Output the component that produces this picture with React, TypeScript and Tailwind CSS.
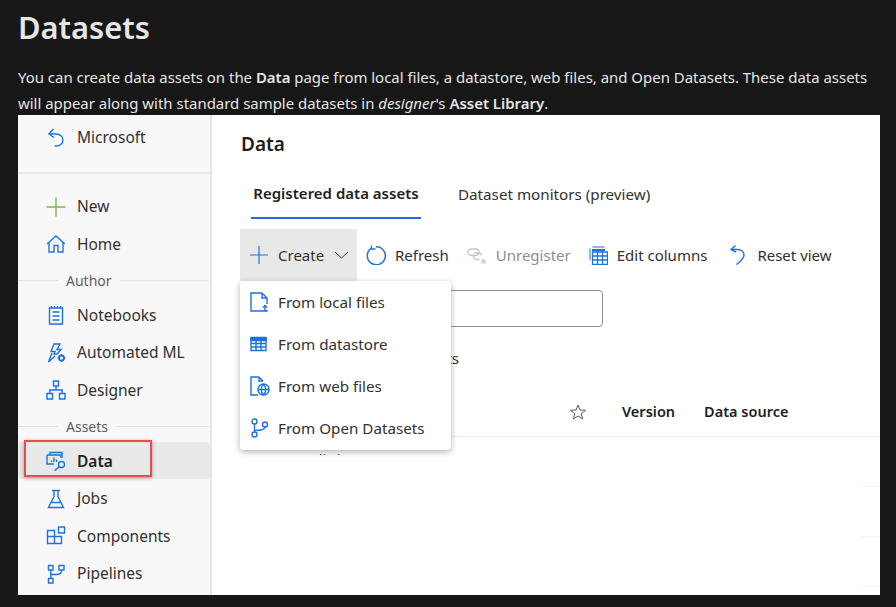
import type { ReactNode } from "react";

const BLUE = "#1c72e0";

function Ico({ children, w = 20, h = 20 }: { children: ReactNode; w?: number; h?: number }) {
  return (
    <svg width={w} height={h} viewBox={`0 0 ${w} ${h}`} fill="none" stroke={BLUE} strokeWidth="1.4" className="shrink-0">
      {children}
    </svg>
  );
}

const BackIcon = () => (
  <Ico>
    <path d="M7.500 1 3 6l5 3.500" />
    <path d="M3.500 6h6.500c4 0 7 2.500 7 6s-3 6-6.500 6H8.500" />
  </Ico>
);
const PlusGreenIcon = () => (
  <Ico>
    <path d="M10 0.500v19M0.500 10h19" stroke="#7ab648" />
  </Ico>
);
const HomeIcon = () => (
  <Ico>
    <path d="M1 10 10 2l9 8" />
    <path d="M3 8.500v9.500h5v-6.500h4V18h5V8.500" />
  </Ico>
);
const NotebookIcon = () => (
  <Ico>
    <path d="M3.500 3h13v16h-13z" />
    <path d="M5.500 1v2M8.500 1v2M11.500 1v2M14.500 1v2M6.500 7h7M6.500 11h7M6.500 15h7" />
  </Ico>
);
const AutoMlIcon = () => (
  <Ico>
    <path d="M8 1h6l-3 5.500h4L11 11H8l1-2.500H5z" />
    <path d="M6 10 2.500 19 9 13" />
    <circle cx="15.500" cy="15" r="2.500" strokeWidth="1.800" />
    <path d="M15.500 11v1.200M15.500 17.800V19M11.500 15h1.200M18.300 15h1.200" />
  </Ico>
);
const DesignerIcon = () => (
  <Ico>
    <path d="M7.500 1h5v5h-5zM1 13.500h5.500V19H1zM13.500 13.500H19V19h-5.500z" />
    <path d="M10 6v4M3.800 13.500V10h12.400v3.500" />
  </Ico>
);
const DataIcon = () => (
  <Ico>
    <path d="M4 4V1.500h12V7" />
    <path d="M1 4h14v3M8 13H1V4" />
    <path d="M5.500 11V9.500M8 11V6.500M10.500 11V8.500" />
    <circle cx="15.500" cy="13.500" r="3" />
    <path d="m13.300 15.700-4.800 4" />
  </Ico>
);
const JobsIcon = () => (
  <Ico>
    <path d="M6 1.500h8M8 1.500v6L2.500 18.500h15L12 7.500v-6" />
    <path d="M5 13.500h10" />
  </Ico>
);
const ComponentsIcon = () => (
  <Ico>
    <path d="M1.500 4.500h7v6h-7zM1.500 10.500h7v7h-7zM8.500 10.500h7v7h-7zM12.500 1h6v6h-6z" />
  </Ico>
);
const PipelinesIcon = () => (
  <Ico>
    <path d="M2.500 1.500h4.500v4.500H2.500zM13 1.500h5v4.500h-5zM2.500 14.500h4.500V19H2.500z" />
    <path d="M4.800 6v8.500M4.800 10.500h6.200c2.500 0 4.500-1.500 4.500-4.500" />
  </Ico>
);
const RefreshIcon = () => (
  <Ico>
    <path d="M5.500 3.200a9 9 0 1 0 4.500-1.400" strokeWidth="1.500" />
    <path d="M5.500 0.500v3.500h4" strokeWidth="1.300" />
  </Ico>
);
const UnregisterIcon = () => (
  <svg width="20" height="20" viewBox="0 0 20 20" fill="none" stroke="#c4c4c4" strokeWidth="1.300" className="shrink-0">
    <rect x="1" y="4" width="11" height="6.500" rx="3.200" />
    <path d="M7 8h5a3.200 3.200 0 0 1 2.500 2.500" />
    <path d="M12.500 14.500H9.500A3.200 3.200 0 0 1 6.500 10.500" />
    <path d="m14.500 14.500 4 4M18.500 14.500l-4 4" />
  </svg>
);
const ColumnsIcon = () => (
  <svg width="19" height="19" viewBox="0 0 19 19" fill="none" className="shrink-0">
    <path d="M1 2.500V14M3.500 1h12" stroke={BLUE} />
    <path d="M3 3h13v2.500H3z" fill={BLUE} />
    <path d="M3.500 6h15v12.500h-15zM3.500 10h15M3.500 14h15M8.500 6v12.500M13.500 6v12.500" stroke={BLUE} strokeWidth="1.300" />
  </svg>
);
const ResetIcon = () => (
  <Ico w={18} h={20}>
    <path d="M5.500 0.500 1 4.500l5 2.500" />
    <path d="M1.500 4.500h6c4 0 6.500 2.500 6.500 5.500 0 2.500-2 4.500-4 6.500L6.500 19.500" />
  </Ico>
);
const FileUpIcon = () => (
  <Ico>
    <path d="M12 1H1v18h16v-1M12 1l5 5v6M12 1v5h5" />
    <path d="M15 19v-5M13 15.500l2-2 2 2" />
  </Ico>
);
const TableIcon = () => (
  <Ico h={16}>
    <path d="M1 1.500h15v13H1z" />
    <path d="M1 2.500h15v2H1z" fill={BLUE} />
    <path d="M1 7.500h15M1 11h15M6 4.500v10M11 4.500v10" />
  </Ico>
);
const FileWebIcon = () => (
  <Ico>
    <path d="M9 1H1v18h7M9 1l4 4M9 1v4h4" />
    <circle cx="13.500" cy="13.500" r="5.500" />
    <path d="M8 13.500h11M13.500 8c-3 3-3 8 0 11M13.500 8c3 3 3 8 0 11" />
  </Ico>
);
const BranchIcon = () => (
  <Ico>
    <circle cx="4.500" cy="3.500" r="2.500" />
    <circle cx="4.500" cy="16.500" r="2.500" />
    <circle cx="15" cy="6.500" r="2.500" />
    <path d="M4.500 6v8M4.500 12.500c5 0 10.500-.5 10.500-3.500" />
  </Ico>
);

const Section = ({ label }: { label: string }) => (
  <div className="flex h-[33.500px] items-center pr-px pt-[3px]">
    <div className="h-px w-10 bg-[#e3e3e3]" />
    <span className="px-2 text-[14px] text-[#605e5c]">{label}</span>
    <div className="h-px flex-1 bg-[#e3e3e3]" />
  </div>
);

function NavItem({ icon, label, active }: { icon: ReactNode; label: string; active?: boolean }) {
  return (
    <div className={`flex h-[37.500px] items-center gap-[12px] pl-[28px] pt-[2px] text-[15.500px] ${active ? "rounded-sm bg-[#e9e9e9] font-semibold text-[#201f1e]" : "text-[#323130]"}`}>
      <span className="flex w-[19px] justify-center">{icon}</span>
      {label}
    </div>
  );
}

const ToolButton = ({ icon, label, muted }: { icon: ReactNode; label: string; muted?: boolean }) => (
  <div className={`flex items-center gap-[9px] text-[15px] ${muted ? "text-[#8f8d8b]" : "text-[#323130]"}`}>
    {icon}
    {label}
  </div>
);

const MenuItem = ({ icon, label }: { icon: ReactNode; label: string }) => (
  <div className="flex h-[42px] items-center gap-[8px] pl-[10px] text-[15.200px] text-[#323130]">
    <span className="flex w-[20px]">{icon}</span>
    {label}
  </div>
);

export default function App() {
  return (
    <div className="h-[607px] w-[896px] overflow-hidden bg-[#171717] pl-[18px] pr-4 text-[#e6e6e6]" style={{ fontFamily: '"Noto Sans", sans-serif' }}>
      <h1 className="h-[61px] pt-[4px] text-[30.800px] font-semibold leading-[46px]">Datasets</h1>
      <p className="h-[54px] pt-[3px] text-[14.950px] leading-[26px]">
        You can create data assets on the <b className="font-semibold">Data</b> page from local files, a datastore, web files, and Open Datasets. These data assets will appear along with standard sample datasets in <i>designer</i>'s <b className="font-semibold">Asset Library</b>.
      </p>

      {/* embedded portal screenshot */}
      <div className="flex h-[480px] w-[862px] bg-white">
        <aside className="h-full w-[194px] shrink-0 overflow-hidden border-r-2 border-[#e6e6e6] bg-[#f8f8f8]">
          <div className="h-[59px] border-b-2 border-[#e9e9e9] pt-[3px]">
            <NavItem icon={<BackIcon />} label="Microsoft" />
          </div>
          <div className="pt-[13px]">
            <NavItem icon={<PlusGreenIcon />} label="New" />
            <NavItem icon={<HomeIcon />} label="Home" />
            <Section label="Author" />
            <NavItem icon={<NotebookIcon />} label="Notebooks" />
            <NavItem icon={<AutoMlIcon />} label="Automated ML" />
            <NavItem icon={<DesignerIcon />} label="Designer" />
            <Section label="Assets" />
            <div className="relative">
              <NavItem icon={<DataIcon />} label="Data" active />
              <div className="absolute left-[6px] top-[-2px] h-[37px] w-[128px] border-2 border-[#ee4b4f] shadow-[0_1px_4px_rgba(0,0,0,0.35)]" />
            </div>
            <NavItem icon={<JobsIcon />} label="Jobs" />
            <NavItem icon={<ComponentsIcon />} label="Components" />
            <NavItem icon={<PipelinesIcon />} label="Pipelines" />
          </div>
        </aside>

        <main className="relative min-w-0 flex-1 pl-[28px]">
          <h2 className="ml-px h-[58px] pt-[14px] text-[19px] font-semibold leading-[30px] text-[#201f1e]">Data</h2>
          <div className="ml-[11px] flex h-[46px]">
            <div className="flex h-[46px] w-[170px] items-center justify-center border-b-2 border-[#1f6fd8] pb-[3px] text-[15px] font-semibold text-[#201f1e]">Registered data assets</div>
            <div className="ml-[37px] flex h-[42px] items-center text-[15.200px] text-[#323130]">Dataset monitors (preview)</div>
          </div>
          <div className="mt-[10px] flex h-[52px] items-center">
            <div className="flex h-[52px] w-[117px] items-center gap-[9px] bg-[#e8e8e8] pl-[9px] text-[15px] text-[#323130]">
              <svg width="20" height="20" viewBox="0 0 20 20" stroke={BLUE} strokeWidth="1.200" className="shrink-0"><path d="M10 1v18M1 10h18" /></svg>
              Create
              <svg width="15" height="8" viewBox="0 0 15 8" fill="none" stroke="#323130" className="ml-px shrink-0"><path d="m1 1 6.500 6L14 1" /></svg>
            </div>
            <div className="ml-[9px]"><ToolButton icon={<RefreshIcon />} label="Refresh" /></div>
            <div className="ml-[18px]"><ToolButton icon={<UnregisterIcon />} label="Unregister" muted /></div>
            <div className="ml-[18px]"><ToolButton icon={<ColumnsIcon />} label="Edit columns" /></div>
            <div className="ml-[23px]"><ToolButton icon={<ResetIcon />} label="Reset view" /></div>
          </div>

          <div className="mt-[9px] h-[37px] w-[363px] rounded-sm border border-[#8f8f8f]" />
          <div className="flex h-[62px] w-[219px] items-center justify-end text-[15px] text-[#323130]">ts</div>

          <div className="flex h-[48px] items-center border-b border-[#eeeeee] pb-[2px] text-[14.500px] font-semibold text-[#201f1e]">
            <svg width="16" height="16" viewBox="0 0 16 16" fill="none" stroke="#5c5a58" className="ml-[330px] shrink-0"><path d="m8 1 2 5 5.500.300-4.300 3.400 1.500 5.300L8 12l-4.700 3 1.500-5.300L.5 6.300 6 6z" /></svg>
            <span className="ml-[36px]">Version</span>
            <span className="ml-[29px]">Data source</span>
          </div>

          {/* first table row is cut off by the crop, only the tops of its letters show */}
          <div className="flex h-[18px] overflow-hidden pt-[12px] text-[15px] leading-[20px] text-[#323130]">
            <span className="ml-[49px] w-[335px] text-[#1f6fd8]">small-dataset</span>
            <span className="w-[80px]">1</span>
            <span>URL</span>
          </div>
          <div className="flex h-[32px] justify-end"><div className="w-[18px] border-b border-[#f3f3f3]" /></div>
          <div className="flex h-[50px] justify-end"><div className="w-[18px] border-b border-[#f3f3f3]" /></div>
          <div className="flex h-[50px] justify-end"><div className="w-[18px] border-b border-[#f3f3f3]" /></div>

          {/* create dropdown */}
          <div className="absolute left-[28px] top-[166px] h-[169px] w-[211px] rounded-sm bg-white shadow-[0_2px_6px_rgba(0,0,0,0.3)]">
            <MenuItem icon={<FileUpIcon />} label="From local files" />
            <MenuItem icon={<TableIcon />} label="From datastore" />
            <MenuItem icon={<FileWebIcon />} label="From web files" />
            <MenuItem icon={<BranchIcon />} label="From Open Datasets" />
          </div>
        </main>
      </div>
    </div>
  );
}
